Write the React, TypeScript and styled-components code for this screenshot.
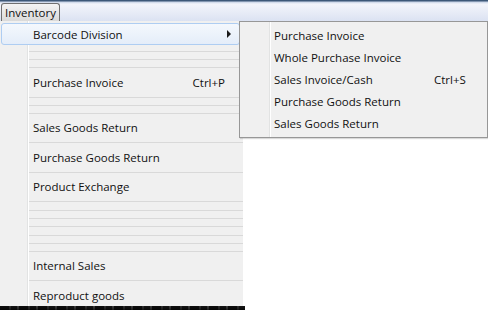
import React from "react";
import styled, { createGlobalStyle } from "styled-components";

const Global = createGlobalStyle`
  html, body {
    margin: 0;
    padding: 0;
    background: #fff;
    font-family: "Open Sans", "Noto Sans", sans-serif;
    font-size: 11.5px;
    color: #111;
  }
`;

const Page = styled.div`
  position: relative;
  width: 488px;
  height: 310px;
  overflow: hidden;
  background: #fff;
`;

const MenuBar = styled.div`
  height: 21px;
  display: flex;
  align-items: flex-end;
  padding-left: 1px;
  box-sizing: border-box;
  background: linear-gradient(
    #3d5878 0px,
    #3d5878 1px,
    #c9d4e7 2px,
    #f3f5fb 4px,
    #dbe2f2 21px
  );
`;

const BarButton = styled.div`
  height: 18px;
  padding: 0 3px 1px;
  display: flex;
  align-items: center;
  box-sizing: border-box;
  border: 1px solid #707070;
  border-bottom: none;
  border-radius: 3px 3px 0 0;
  background: linear-gradient(#f4f4f4, #dadada);
  font-size: 11.5px;
`;

const MainMenu = styled.div`
  width: 243px;
  height: 285px;
  overflow: hidden;
  display: flex;
  flex-direction: column;
  padding-top: 2px;
  box-sizing: border-box;
  background: linear-gradient(
    to right,
    #f0f0f0 0 27px,
    #e2e3e3 27px 28px,
    #ffffff 28px 29px,
    #f0f0f0 29px
  );
`;

const Row = styled.div<{ h: number; line?: boolean }>`
  height: ${(p) => p.h}px;
  flex: none;
  margin-left: 29px;
  padding: 0 18px 1px 4px;
  box-sizing: border-box;
  display: flex;
  align-items: center;
  justify-content: space-between;
  border-bottom: ${(p) => (p.line === false ? "none" : "1px solid #d9d9d9")};
`;

const HotRow = styled.div`
  height: 22px;
  flex: none;
  margin: 0 3px 0 1px;
  padding: 0 8px 0 31px;
  box-sizing: border-box;
  display: flex;
  align-items: center;
  justify-content: space-between;
  border: 1px solid #aecdf2;
  border-radius: 3px;
  background: linear-gradient(#f4f8fd, #e4edf9);
`;

const Arrow = styled.span`
  width: 0;
  height: 0;
  border-top: 4px solid transparent;
  border-bottom: 4px solid transparent;
  border-left: 4px solid #1a1a1a;
`;

const Key = styled.span`
  flex: none;
`;

const Strip = styled.div`
  width: 245px;
  height: 4px;
  background: linear-gradient(#6a6a6a, #2a2a2a),
    repeating-linear-gradient(to right, #222 0 9px, #777 9px 11px, #333 11px 17px, #999 17px 19px);
  background-blend-mode: multiply;
`;

const SubMenu = styled.div`
  position: absolute;
  left: 239px;
  top: 21px;
  width: 249px;
  height: 117px;
  box-sizing: border-box;
  padding: 2px 0 3px;
  border: 1px solid #979797;
  box-shadow: 1px 1px 1px rgba(0, 0, 0, 0.15);
  background: linear-gradient(
    to right,
    #f0f0f0 0 29px,
    #e2e3e3 29px 30px,
    #ffffff 30px 31px,
    #f0f0f0 31px
  );
`;

const SubRow = styled.div`
  height: 22px;
  display: flex;
  align-items: center;
  padding-left: 34px;
  box-sizing: border-box;
`;

const SubLabel = styled.span`
  width: 160px;
`;

const spacer = (h: number, k: string) => <Row key={k} h={h} />;

export default function App() {
  return (
    <Page>
      <Global />
      <MenuBar>
        <BarButton>Inventory</BarButton>
      </MenuBar>
      <MainMenu>
        <HotRow>
          <span>Barcode Division</span>
          <Arrow />
        </HotRow>
        {spacer(7, "a")}
        {spacer(8, "b")}
        {spacer(8, "c")}
        <Row h={30}>
          <span>Purchase Invoice</span>
          <Key>Ctrl+P</Key>
        </Row>
        {spacer(8, "d")}
        {spacer(8, "e")}
        <Row h={29}>Sales Goods Return</Row>
        <Row h={30}>Purchase Goods Return</Row>
        <Row h={29}>Product Exchange</Row>
        {spacer(9, "f")}
        {spacer(8, "g")}
        {spacer(8, "h")}
        {spacer(9, "i")}
        {spacer(8, "j")}
        {spacer(8, "k")}
        <Row h={29}>Internal Sales</Row>
        <Row h={30} line={false}>
          Reproduct goods
        </Row>
      </MainMenu>
      <Strip />
      <SubMenu>
        <SubRow>Purchase Invoice</SubRow>
        <SubRow>Whole Purchase Invoice</SubRow>
        <SubRow>
          <SubLabel>Sales Invoice/Cash</SubLabel>
          <Key>Ctrl+S</Key>
        </SubRow>
        <SubRow>Purchase Goods Return</SubRow>
        <SubRow>Sales Goods Return</SubRow>
      </SubMenu>
    </Page>
  );
}
